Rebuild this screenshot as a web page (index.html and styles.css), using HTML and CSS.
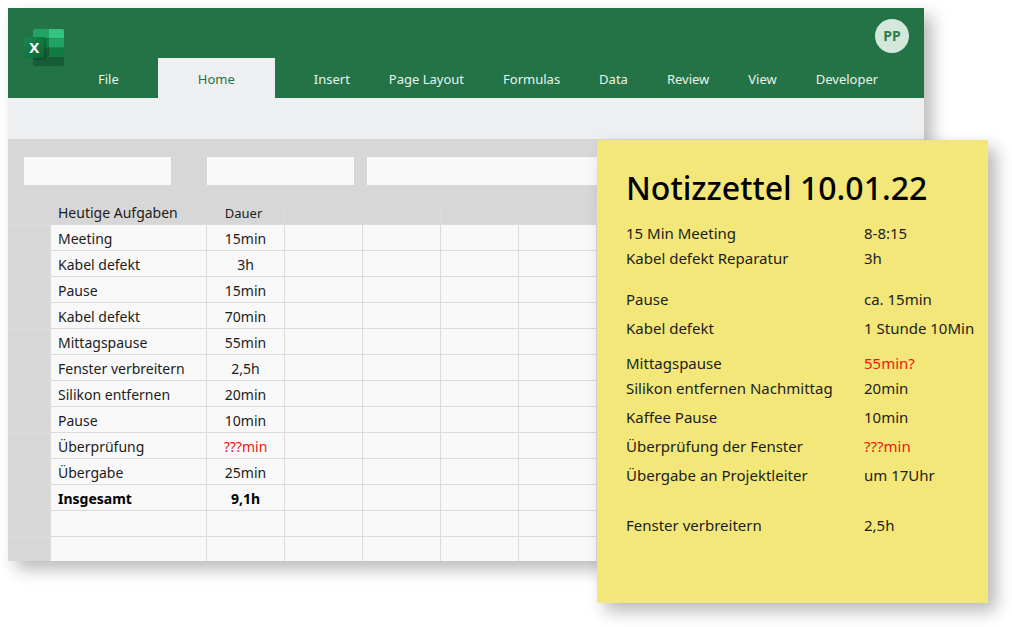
FILE: index.html
```html
<!DOCTYPE html>
<html lang="de">
<head>
<meta charset="utf-8">
<title>Aufgaben und Notizzettel</title>
<link rel="stylesheet" href="styles.css">
</head>
<body>
<main class="stage">
  <section class="workbook">
    <header class="titlebar">
      <svg class="logo" width="40" height="38" viewBox="0 0 40 38" role="img" aria-label="Excel">
        <defs>
          <linearGradient id="badge" x1="0" y1="0" x2="1" y2="1">
            <stop offset="0" stop-color="#18884f"/>
            <stop offset="1" stop-color="#0b6631"/>
          </linearGradient>
          <clipPath id="sheet"><rect x="9" y="0" width="31" height="37" rx="1.5"/></clipPath>
        </defs>
        <g clip-path="url(#sheet)">
          <rect x="9" y="0" width="31" height="37" fill="#185c37"/>
          <rect x="9" y="0" width="16" height="9.3" fill="#21a366"/>
          <rect x="25" y="0" width="15" height="9.3" fill="#33c481"/>
          <rect x="9" y="9.3" width="16" height="9.4" fill="#107c41"/>
          <rect x="25" y="9.3" width="15" height="9.4" fill="#21a366"/>
          <rect x="25" y="18.7" width="15" height="9.3" fill="#107c41"/>
          <path d="M9 8h11.500a1.500 1.500 0 0 1 1.500 1.500V29a1.500 1.500 0 0 1-1.500 1.500H9z" fill="#000" opacity=".2"/>
        </g>
        <rect x="0" y="8" width="20.500" height="21" rx="1.700" fill="url(#badge)"/>
        <text class="logo-letter" x="10.250" y="24" text-anchor="middle">X</text>
      </svg>
      <nav class="tabs">
        <a class="tab" href="#">File</a>
        <a class="tab tab-active" href="#" aria-current="page">Home</a>
        <a class="tab" href="#">Insert</a>
        <a class="tab" href="#">Page Layout</a>
        <a class="tab" href="#">Formulas</a>
        <a class="tab" href="#">Data</a>
        <a class="tab" href="#">Review</a>
        <a class="tab" href="#">View</a>
        <a class="tab" href="#">Developer</a>
      </nav>
      <button class="avatar" type="button">PP</button>
    </header>
    <div class="ribbon"></div>
    <div class="sheet">
      <div class="fields">
        <input class="field field-name" type="text" aria-label="Namenfeld">
        <input class="field field-style" type="text" aria-label="Format">
        <input class="field field-formula" type="text" aria-label="Formel">
      </div>
      <table class="grid">
        <colgroup>
          <col class="col-index"><col class="col-task"><col class="col-cell"><col class="col-cell"><col class="col-cell"><col class="col-cell"><col class="col-cell"><col class="col-cell"><col class="col-cell"><col class="col-cell"><col>
        </colgroup>
        <thead>
          <tr><th></th><th scope="col" class="task">Heutige Aufgaben</th><th scope="col" class="time-head">Dauer</th><th></th><th></th><th></th><th></th><th></th><th></th><th></th><th></th></tr>
        </thead>
        <tbody>
          <tr><td></td><td>Meeting</td><td>15min</td><td></td><td></td><td></td><td></td><td></td><td></td><td></td><td></td></tr>
          <tr><td></td><td>Kabel defekt</td><td>3h</td><td></td><td></td><td></td><td></td><td></td><td></td><td></td><td></td></tr>
          <tr><td></td><td>Pause</td><td>15min</td><td></td><td></td><td></td><td></td><td></td><td></td><td></td><td></td></tr>
          <tr><td></td><td>Kabel defekt</td><td>70min</td><td></td><td></td><td></td><td></td><td></td><td></td><td></td><td></td></tr>
          <tr><td></td><td>Mittagspause</td><td>55min</td><td></td><td></td><td></td><td></td><td></td><td></td><td></td><td></td></tr>
          <tr><td></td><td>Fenster verbreitern</td><td>2,5h</td><td></td><td></td><td></td><td></td><td></td><td></td><td></td><td></td></tr>
          <tr><td></td><td>Silikon entfernen</td><td>20min</td><td></td><td></td><td></td><td></td><td></td><td></td><td></td><td></td></tr>
          <tr><td></td><td>Pause</td><td>10min</td><td></td><td></td><td></td><td></td><td></td><td></td><td></td><td></td></tr>
          <tr><td></td><td>Überprüfung</td><td class="open">???min</td><td></td><td></td><td></td><td></td><td></td><td></td><td></td><td></td></tr>
          <tr><td></td><td>Übergabe</td><td>25min</td><td></td><td></td><td></td><td></td><td></td><td></td><td></td><td></td></tr>
          <tr class="total"><td></td><td>Insgesamt</td><td>9,1h</td><td></td><td></td><td></td><td></td><td></td><td></td><td></td><td></td></tr>
          <tr><td></td><td></td><td></td><td></td><td></td><td></td><td></td><td></td><td></td><td></td><td></td></tr>
          <tr><td></td><td></td><td></td><td></td><td></td><td></td><td></td><td></td><td></td><td></td><td></td></tr>
        </tbody>
      </table>
    </div>
  </section>

  <aside class="note">
    <h1 class="note-title">Notizzettel 10.01.22</h1>
    <dl class="entries">
      <div class="entry"><dt>15 Min Meeting</dt><dd>8-8:15</dd></div>
      <div class="entry"><dt>Kabel defekt Reparatur</dt><dd>3h</dd></div>
      <div class="entry gap-l"><dt>Pause</dt><dd>ca. 15min</dd></div>
      <div class="entry gap-s"><dt>Kabel defekt</dt><dd>1 Stunde 10Min</dd></div>
      <div class="entry gap-m"><dt>Mittagspause</dt><dd class="open">55min?</dd></div>
      <div class="entry"><dt>Silikon entfernen Nachmittag</dt><dd>20min</dd></div>
      <div class="entry gap-s"><dt>Kaffee Pause</dt><dd>10min</dd></div>
      <div class="entry gap-s"><dt>Überprüfung der Fenster</dt><dd class="open">???min</dd></div>
      <div class="entry gap-s"><dt>Übergabe an Projektleiter</dt><dd>um 17Uhr</dd></div>
      <div class="entry gap-xl"><dt>Fenster verbreitern</dt><dd>2,5h</dd></div>
    </dl>
  </aside>
</main>
</body>
</html>
```

FILE: styles.css
```css
* {
  box-sizing: border-box;
}

body {
  margin: 0;
  background: #fff;
  color: #1c1c1c;
  font-family: "Noto Sans", "Open Sans", sans-serif;
  font-size: 14px;
  line-height: 20px;
}

.stage {
  position: relative;
  padding: 8px 88px 66px 8px;
}

.workbook {
  box-shadow: 8px 8px 16px rgba(0, 0, 0, 0.28);
}

.titlebar {
  display: flex;
  justify-content: space-between;
  height: 90px;
  padding: 0 15px 0 16px;
  background: #247346;
}

.logo {
  flex: none;
  margin-top: 21px;
}

.logo-letter {
  fill: #fff;
  font-family: "Open Sans", sans-serif;
  font-size: 15px;
  font-weight: 700;
}

.tabs {
  display: flex;
  flex: 1;
  align-items: flex-end;
  gap: 39px;
  padding-left: 34px;
}

.tab {
  height: 40px;
  color: #e9f3ed;
  font-size: 13px;
  line-height: 42px;
  text-decoration: none;
  white-space: nowrap;
}

.tab-active {
  padding: 0 40px;
  background: #eeeff1;
  color: #247346;
}

.avatar {
  flex: none;
  width: 34px;
  height: 34px;
  margin: 11px 0 0 -34px;
  padding: 0;
  border: 0;
  border-radius: 50%;
  background: #d3e8da;
  color: #2f7d4f;
  font: 700 14px/34px "Noto Sans", sans-serif;
}

.ribbon {
  height: 41px;
  background: #eeeff1;
}

.sheet {
  padding-top: 18px;
  background: #d7d7d7;
}

.fields {
  display: flex;
  padding: 0 16px 17px;
}

.field {
  width: 147px;
  height: 28px;
  padding: 0 8px;
  border: 0;
  background: #f8f8f8;
  font: inherit;
}

.field-style {
  margin: 0 13px 0 36px;
}

.field-formula {
  flex: 1;
}

.grid {
  width: 100%;
  border-collapse: separate;
  border-spacing: 0;
  table-layout: fixed;
}

.col-index {
  width: 43px;
}

.col-task {
  width: 156px;
}

.col-cell {
  width: 78px;
}

.grid th,
.grid td {
  height: 26px;
  padding: 0;
  border: solid #dbdbdb;
  border-width: 0 1px 1px 0;
  font-size: 14px;
  font-weight: 400;
  line-height: 20px;
  text-align: center;
  white-space: nowrap;
}

.grid th {
  height: 23px;
}

.grid td {
  padding-top: 2px;
  background: #f8f8f8;
}

.grid td:first-child {
  background: #d7d7d7;
}

.grid td:nth-child(2),
.grid .task {
  padding-left: 7px;
  text-align: left;
}

.grid .time-head {
  padding-right: 4px;
  font-size: 13px;
}

.grid .total td {
  color: #000;
  font-weight: 700;
}

.grid tr:last-child td {
  height: 24px;
  border-bottom: 0;
}

.grid thead tr:last-child th {
  border-bottom: 1px solid #dbdbdb;
}

.grid .open,
.entries .open {
  color: #f01414;
}

/* Paper note lying over the workbook */
.note {
  position: absolute;
  top: 140px;
  right: 24px;
  width: 391px;
  padding: 24px 8px 65px 29px;
  background: #f3e779;
  box-shadow: 8px 8px 16px rgba(0, 0, 0, 0.28);
}

.note-title {
  margin: 0 0 9px;
  color: #000;
  font-size: 32px;
  font-weight: 500;
  line-height: 48px;
}

.entries {
  margin: 0;
  font-size: 15px;
  line-height: 25px;
}

.entry {
  display: grid;
  grid-template-columns: 238px 1fr;
  white-space: nowrap;
}

.entry dd {
  margin: 0;
}

.gap-s {
  margin-top: 4px;
}

.gap-m {
  margin-top: 10px;
}

.gap-l {
  margin-top: 16px;
}

.gap-xl {
  margin-top: 25px;
}
```
